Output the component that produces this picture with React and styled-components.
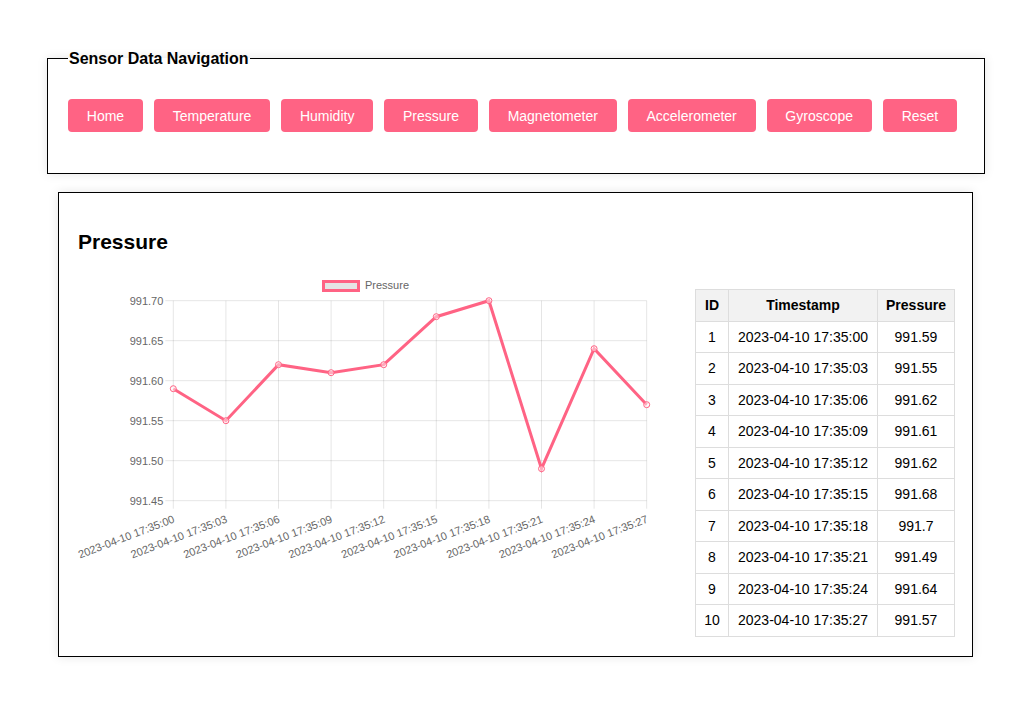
import React from "react";
import styled, { createGlobalStyle } from "styled-components";

const GlobalStyle = createGlobalStyle`
  body {
    margin: 0;
    background: #fff;
    font-family: "Liberation Sans", Arial, sans-serif;
    color: #000;
  }
`;

const Page = styled.div`
  padding-top: 49px;
  padding-bottom: 40px;
`;

const Nav = styled.fieldset`
  box-sizing: border-box;
  width: 938px;
  margin: 0 0 0 47px;
  padding: 32px 20px 41px 20px;
  border: 1px solid #000;
  box-shadow: 0 0 10px rgba(0, 0, 0, 0.1);
  min-inline-size: 0;
`;

const NavTitle = styled.legend`
  padding: 0 1px;
  margin-left: 0;
  font-size: 16px;
  font-weight: bold;
  line-height: normal;
  position: relative;
  top: 1px;
`;

const ButtonRow = styled.div`
  display: flex;
  gap: 11px;
`;

const NavButton = styled.button`
  height: 33px;
  padding: 0 18.8px;
  border: none;
  border-radius: 4px;
  background: #ff6384;
  color: #fff;
  font-family: "Liberation Sans", Arial, sans-serif;
  font-size: 14px;
  cursor: pointer;
`;

const Panel = styled.section`
  box-sizing: border-box;
  width: 915px;
  margin: 18px 0 0 58px;
  padding: 15px 17px 19px 19px;
  border: 1px solid #000;
  box-shadow: 0 0 10px rgba(0, 0, 0, 0.1);
`;

const Title = styled.h2`
  margin: 22px 0 18px;
  font-size: 21px;
  font-weight: bold;
  line-height: normal;
`;

const Content = styled.div`
  display: flex;
  justify-content: space-between;
  align-items: flex-start;
`;

const ChartSvg = styled.svg`
  display: block;
  width: 590px;
  height: 295px;
  overflow: visible;
  font-family: "Liberation Sans", Arial, sans-serif;
  font-size: 11px;
`;

const Table = styled.table`
  margin-top: 17px;
  border-collapse: collapse;
  font-size: 14px;
`;

const Th = styled.th`
  padding: 7.25px 8px;
  line-height: 16px;
  border: 1px solid #ddd;
  background: #f2f2f2;
  font-weight: bold;
  text-align: center;
  width: ${(p) => p.$w}px;
`;

const Td = styled.td`
  padding: 7.25px 8px;
  line-height: 16px;
  border: 1px solid #ddd;
  text-align: center;
`;

const navItems = [
  "Home",
  "Temperature",
  "Humidity",
  "Pressure",
  "Magnetometer",
  "Accelerometer",
  "Gyroscope",
  "Reset",
];

const values = [991.59, 991.55, 991.62, 991.61, 991.62, 991.68, 991.7, 991.49, 991.64, 991.57];
const rows = values.map((v, i) => ({
  id: i + 1,
  time: `2023-04-10 17:35:${String(i * 3).padStart(2, "0")}`,
  value: v,
}));

// plot area in svg coords
const PL = 95.3;
const PR = 568.7;
const PT = 28.7;
const PB = 228.7;
const MAX = 991.7;
const MIN = 991.45;
const yTicks = [991.7, 991.65, 991.6, 991.55, 991.5, 991.45];

const xAt = (i) => PL + ((PR - PL) / (values.length - 1)) * i;
const yAt = (v) => PT + ((MAX - v) / (MAX - MIN)) * (PB - PT);

const PressureChart = () => {
  const grid = "rgba(0,0,0,0.1)";
  const line = values.map((v, i) => `${xAt(i)},${yAt(v)}`).join(" ");
  return (
    <ChartSvg viewBox="0 0 590 295">
      {/* legend */}
      <rect x="245.5" y="9.5" width="35" height="9" fill="rgba(0,0,0,0.1)" stroke="#ff6384" strokeWidth="3" />
      <text x="287" y="16.7" fill="#666">Pressure</text>

      {/* horizontal grid + y labels */}
      {yTicks.map((t) => (
        <g key={t}>
          <line x1={PL - 8} x2={PR} y1={yAt(t)} y2={yAt(t)} stroke={grid} strokeWidth="1" />
          <text x={PL - 10} y={yAt(t) + 3.9} textAnchor="end" fill="#666">
            {t.toFixed(2)}
          </text>
        </g>
      ))}

      {/* vertical grid + x labels */}
      {rows.map((r, i) => (
        <g key={r.id}>
          <line x1={xAt(i)} x2={xAt(i)} y1={PT} y2={PB + 8} stroke={grid} strokeWidth="1" />
          <text
            x={xAt(i) + 2}
            y={250}
            textAnchor="end"
            fill="#666"
            transform={`rotate(-21 ${xAt(i) + 2} 250)`}
          >
            {r.time}
          </text>
        </g>
      ))}

      <polyline points={line} fill="none" stroke="#ff6384" strokeWidth="3" strokeLinejoin="miter" />
      {values.map((v, i) => (
        <circle key={i} cx={xAt(i)} cy={yAt(v)} r="3" fill="rgba(255,255,255,0.45)" stroke="#ff6384" strokeWidth="1" />
      ))}
    </ChartSvg>
  );
};

export default function App() {
  return (
    <Page>
      <GlobalStyle />
      <Nav>
        <NavTitle>Sensor Data Navigation</NavTitle>
        <ButtonRow>
          {navItems.map((item) => (
            <NavButton key={item}>{item}</NavButton>
          ))}
        </ButtonRow>
      </Nav>
      <Panel>
        <Title>Pressure</Title>
        <Content>
          <PressureChart />
          <Table>
            <thead>
              <tr>
                <Th $w={16}>ID</Th>
                <Th $w={132}>Timestamp</Th>
                <Th $w={60}>Pressure</Th>
              </tr>
            </thead>
            <tbody>
              {rows.map((r) => (
                <tr key={r.id}>
                  <Td>{r.id}</Td>
                  <Td>{r.time}</Td>
                  <Td>{r.value}</Td>
                </tr>
              ))}
            </tbody>
          </Table>
        </Content>
      </Panel>
    </Page>
  );
}
